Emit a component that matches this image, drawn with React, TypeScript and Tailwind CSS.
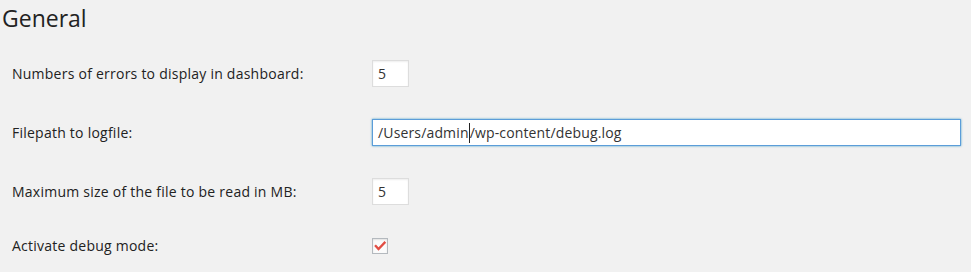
import React from 'react';

function TextField({ value, width }: { value: string; width: string }) {
    return (
        <input
            type="text"
            defaultValue={value}
            readOnly
            className={`h-[27px] ${width} border border-[#dddddd] bg-white px-[5px] text-sm tracking-[0.2px] text-[#333] shadow-[inset_0_1px_2px_rgba(0,0,0,0.07)] outline-none`}
        />
    );
}

function FocusedField({ before, after }: { before: string; after: string }) {
    // mimic a focused input with the caret parked after "admin"
    return (
        <div
            role="textbox"
            className="flex h-[27px] w-[589px] items-center border border-[#5b9dd9] bg-white px-[5px] text-sm tracking-[0.15px] text-[#333] shadow-[0_0_2px_rgba(30,140,190,0.8)]"
        >
            <span className="whitespace-pre">{before}</span>
            <span className="h-[20px] w-px bg-[#222]" />
            <span className="whitespace-pre">{after}</span>
        </div>
    );
}

function Checkbox() {
    return (
        <div className="flex h-4 w-4 items-center justify-center border border-[#b4b9be] bg-[#fbfbfb] shadow-[inset_0_1px_2px_rgba(0,0,0,0.1)]">
            <svg viewBox="0 0 16 16" className="h-4 w-4">
                <polyline
                    points="3.2,8 6.3,11.4 13.2,4.2"
                    fill="none"
                    stroke="#e14d43"
                    strokeWidth="2.6"
                    strokeLinecap="square"
                />
            </svg>
        </div>
    );
}

function Row({
    label,
    children,
    last,
}: {
    label: string;
    children: React.ReactNode;
    last?: boolean;
}) {
    return (
        <div className={`flex items-center pl-[12px] ${last ? 'py-[15px]' : 'py-4'}`}>
            <label className="w-[360px] text-sm leading-5 tracking-[0.24px] text-[#222]">
                {label}
            </label>
            {children}
        </div>
    );
}

export default function App() {
    return (
        <div className="min-h-screen bg-[#f1f1f1] font-['Open_Sans',sans-serif] text-[#222]">
            <h2 className="pt-[4px] pl-[2px] text-[23px] leading-[29px] font-normal text-[#222]">
                General
            </h2>
            <div className="mt-[11px]">
                <Row label="Numbers of errors to display in dashboard:">
                    <TextField value="5" width="w-[37px]" />
                </Row>
                <Row label="Filepath to logfile:">
                    <FocusedField before="/Users/admin" after="/wp-content/debug.log" />
                </Row>
                <Row label="Maximum size of the file to be read in MB:">
                    <TextField value="5" width="w-[37px]" />
                </Row>
                <Row label="Activate debug mode:" last>
                    <Checkbox />
                </Row>
            </div>
        </div>
    );
}
